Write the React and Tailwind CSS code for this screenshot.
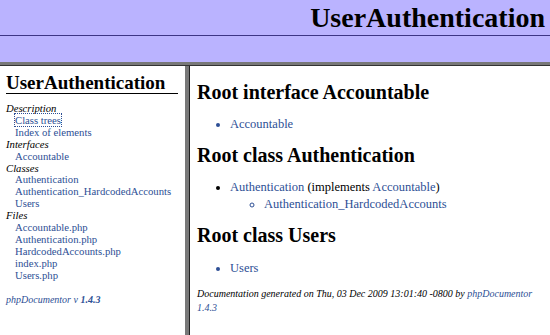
import React from "react";

const link = "text-[#2d4f95]";

const Side = () => (
  <div className="w-[185px] shrink-0 bg-white pl-[6px] pr-[7px] pt-[7px]">
    <h2 className="border-b border-black text-[19px] font-bold leading-[20px]">
      UserAuthentication
    </h2>
    <div className="mt-[9px] text-[10.7px] leading-[11.9px]">
      <div className="italic">Description</div>
      <div className="pl-[9px]">
        <span className={`${link} outline-1 outline-dotted outline-[#2d4f95]`}>Class trees</span>
      </div>
      <div className={`pl-[9px] ${link}`}>Index of elements</div>
      <div className="italic">Interfaces</div>
      <div className={`pl-[9px] ${link}`}>Accountable</div>
      <div className="italic">Classes</div>
      <div className={`pl-[9px] ${link}`}>Authentication</div>
      <div className={`pl-[9px] ${link}`}>Authentication_HardcodedAccounts</div>
      <div className={`pl-[9px] ${link}`}>Users</div>
      <div className="italic">Files</div>
      <div className={`pl-[9px] ${link}`}>Accountable.php</div>
      <div className={`pl-[9px] ${link}`}>Authentication.php</div>
      <div className={`pl-[9px] ${link}`}>HardcodedAccounts.php</div>
      <div className={`pl-[9px] ${link}`}>index.php</div>
      <div className={`pl-[9px] ${link}`}>Users.php</div>
    </div>
    <div className={`mt-[10px] text-[10px] italic ${link}`}>
      phpDocumentor v <b>1.4.3</b>
    </div>
  </div>
);

const Main = () => (
  <div className="flex-1 bg-white pl-[7px] pt-[14px] text-[12.5px] leading-[14px]">
    <h1 className="text-[20px] font-bold leading-[24px]">Root interface Accountable</h1>
    <ul className="mt-[13px] list-disc pl-[33px]">
      <li className={link}>Accountable</li>
    </ul>
    <h1 className="mt-[12px] text-[20px] font-bold leading-[24px]">Root class Authentication</h1>
    <ul className="mt-[13px] list-disc pl-[33px]">
      <li>
        <span className={link}>Authentication</span> (implements <span className={link}>Accountable</span>)
        <ul className="mt-[3px] list-[circle] pl-[34px]">
          <li className={link}>Authentication_HardcodedAccounts</li>
        </ul>
      </li>
    </ul>
    <h1 className="mt-[12px] text-[20px] font-bold leading-[24px]">Root class Users</h1>
    <ul className="mt-[14px] list-disc pl-[33px]">
      <li className={link}>Users</li>
    </ul>
    <div className="mt-[12px] text-[10px] italic leading-[14px]">
      <div>
        Documentation generated on Thu, 03 Dec 2009 13:01:40 -0800 by{" "}
        <span className={link}>phpDocumentor</span>
      </div>
      <div className={link}>1.4.3</div>
    </div>
  </div>
);

export default function App() {
  return (
    <div className="flex h-[335px] w-[550px] flex-col overflow-hidden bg-white font-['Liberation_Serif',serif] text-black">
      <div className="flex h-[35px] items-center justify-end bg-[#bab3ff] pr-[5px]">
        <span className="text-[28px] font-bold">UserAuthentication</span>
      </div>
      <div className="h-[1px] bg-[#3d3585]" />
      <div className="h-[26px] bg-[#bab3ff]" />
      <div className="h-[3px] bg-[#787878]" />
      <div className="h-[1px] bg-[#333]" />
      <div className="flex flex-1">
        <Side />
        <div className="w-[5px] shrink-0 border-r border-[#222] bg-[#787878]" />
        <Main />
      </div>
    </div>
  );
}
